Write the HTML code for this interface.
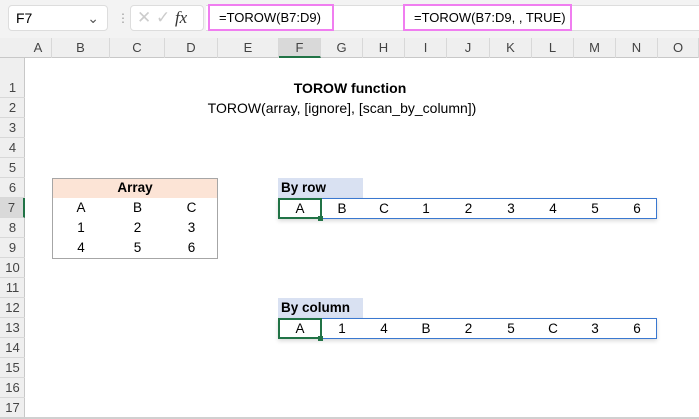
<!DOCTYPE html><html><head><style>
*{margin:0;padding:0;box-sizing:border-box}
body{width:699px;height:419px;overflow:hidden;background:#fff;font-family:"Liberation Sans",Arial,sans-serif;font-size:13.5px;color:#000;position:relative}
.a{position:absolute;white-space:nowrap}
.ch{position:absolute;top:38px;height:20px;line-height:20px;text-align:center;color:#444;border-right:1px solid #d8d8d8;font-size:13px}
.rh{position:absolute;left:0;width:25px;height:20px;line-height:20px;text-align:center;color:#444;border-bottom:1px solid #d8d8d8;font-size:13px}
.c{position:absolute;height:20px;line-height:20px;text-align:center;white-space:nowrap}
</style></head><body>
<div class="a" style="left:0;top:0;width:699px;height:38px;background:#f3f3f3"></div>
<div class="a" style="left:8px;top:5px;width:100px;height:26px;background:#fff;border:1px solid #ddd;border-radius:4px;line-height:24px;padding-left:7px;font-size:14px">F7<span style="position:absolute;right:8px;top:0;color:#555">&#8964;</span></div>
<div class="a" style="left:117px;top:10px;color:#999;line-height:16px;font-size:12px">&#8942;</div>
<div class="a" style="left:130px;top:5px;width:74px;height:26px;background:#fff;border:1px solid #ddd;border-radius:4px;color:#ccc;line-height:24px;padding-left:6px;font-size:17px">✕ ✓ <i style="color:#333;font-family:'Liberation Serif',serif">fx</i></div>
<div class="a" style="left:206px;top:5px;width:493px;height:26px;background:#fff;border-top:1px solid #ddd;border-bottom:1px solid #ddd"></div>
<div class="a" style="left:208px;top:4px;width:126px;height:27px;border:2px solid #f07ef0;line-height:23px;padding-left:9px;font-size:13px">=TOROW(B7:D9)</div>
<div class="a" style="left:403px;top:4px;width:169px;height:27px;border:2px solid #f07ef0;line-height:23px;padding-left:9px;font-size:13px">=TOROW(B7:D9, , TRUE)</div>
<div class="a" style="left:0;top:38px;width:699px;height:20px;background:#efefef;border-bottom:1px solid #c8c8c8"></div>
<div class="a" style="left:0;top:58px;width:25px;height:361px;background:#efefef;border-right:1px solid #c8c8c8"></div>
<div class="ch" style="left:25px;width:27px">A</div>
<div class="ch" style="left:52px;width:58px">B</div>
<div class="ch" style="left:110px;width:55px">C</div>
<div class="ch" style="left:165px;width:53px">D</div>
<div class="ch" style="left:218px;width:61px">E</div>
<div class="ch" style="left:279px;width:42px;background:#d9d9d9;border-bottom:2px solid #217346;height:20px">F</div>
<div class="ch" style="left:321px;width:42px">G</div>
<div class="ch" style="left:363px;width:42px">H</div>
<div class="ch" style="left:405px;width:42px">I</div>
<div class="ch" style="left:447px;width:43px">J</div>
<div class="ch" style="left:490px;width:42px">K</div>
<div class="ch" style="left:532px;width:42px">L</div>
<div class="ch" style="left:574px;width:42px">M</div>
<div class="ch" style="left:616px;width:42px">N</div>
<div class="ch" style="left:658px;width:41px">O</div>
<div class="rh" style="top:58px;height:40px;line-height:60px">1</div>
<div class="rh" style="top:98px">2</div><div class="rh" style="top:118px">3</div><div class="rh" style="top:138px">4</div><div class="rh" style="top:158px">5</div><div class="rh" style="top:178px">6</div>
<div class="rh" style="top:198px;background:#d9d9d9;border-right:2px solid #217346">7</div>
<div class="rh" style="top:218px">8</div><div class="rh" style="top:238px">9</div><div class="rh" style="top:258px">10</div><div class="rh" style="top:278px">11</div><div class="rh" style="top:298px">12</div><div class="rh" style="top:318px">13</div><div class="rh" style="top:338px">14</div><div class="rh" style="top:358px">15</div><div class="rh" style="top:378px">16</div><div class="rh" style="top:398px">17</div>
<div class="c" style="left:218px;width:264px;top:78px;font-weight:bold;font-size:14px">TOROW function</div>
<div class="c" style="left:142px;width:400px;top:98px;font-size:14px">TOROW(array, [ignore], [scan_by_column])</div>
<div class="a" style="left:52px;top:178px;width:166px;height:81px;border:1px solid #a6a6a6"></div>
<div class="a" style="left:53px;top:179px;width:164px;height:19px;background:#fce4d6"></div>
<div class="c" style="left:52px;width:166px;top:178px;font-weight:bold">Array</div>
<div class="c" style="left:52px;width:58px;top:198px">A</div><div class="c" style="left:110px;width:55px;top:198px">B</div><div class="c" style="left:165px;width:53px;top:198px">C</div>
<div class="c" style="left:52px;width:58px;top:218px">1</div><div class="c" style="left:110px;width:55px;top:218px">2</div><div class="c" style="left:165px;width:53px;top:218px">3</div>
<div class="c" style="left:52px;width:58px;top:238px">4</div><div class="c" style="left:110px;width:55px;top:238px">5</div><div class="c" style="left:165px;width:53px;top:238px">6</div>
<div class="a" style="left:278px;top:178px;width:85px;height:20px;background:#d9e1f2;font-weight:bold;line-height:20px;padding-left:3px">By row</div>
<div class="a" style="left:278px;top:298px;width:85px;height:20px;background:#d9e1f2;font-weight:bold;line-height:20px;padding-left:3px">By column</div>
<div class="a" style="left:278px;top:198px;width:379px;height:21px;border:1px solid #3a78d0;box-shadow:0 2px 4px rgba(0,0,0,.15)"></div>
<div class="a" style="left:278px;top:318px;width:379px;height:21px;border:1px solid #3a78d0;box-shadow:0 2px 4px rgba(0,0,0,.15)"></div>
<div class="a" style="left:278px;top:198px;width:44px;height:21px;border:2px solid #217346"></div>
<div class="a" style="left:318px;top:216px;width:5px;height:5px;background:#217346"></div>
<div class="a" style="left:278px;top:318px;width:44px;height:21px;border:2px solid #217346"></div>
<div class="a" style="left:318px;top:336px;width:5px;height:5px;background:#217346"></div>
<div class="c" style="left:279px;width:42px;top:199px">A</div><div class="c" style="left:321px;width:42px;top:199px">B</div><div class="c" style="left:363px;width:42px;top:199px">C</div><div class="c" style="left:405px;width:42px;top:199px">1</div><div class="c" style="left:447px;width:43px;top:199px">2</div><div class="c" style="left:490px;width:42px;top:199px">3</div><div class="c" style="left:532px;width:42px;top:199px">4</div><div class="c" style="left:574px;width:42px;top:199px">5</div><div class="c" style="left:616px;width:42px;top:199px">6</div>
<div class="c" style="left:279px;width:42px;top:319px">A</div><div class="c" style="left:321px;width:42px;top:319px">1</div><div class="c" style="left:363px;width:42px;top:319px">4</div><div class="c" style="left:405px;width:42px;top:319px">B</div><div class="c" style="left:447px;width:43px;top:319px">2</div><div class="c" style="left:490px;width:42px;top:319px">5</div><div class="c" style="left:532px;width:42px;top:319px">C</div><div class="c" style="left:574px;width:42px;top:319px">3</div><div class="c" style="left:616px;width:42px;top:319px">6</div>
<div class="a" style="left:0;top:417px;width:699px;height:2px;background:#d0d0d0"></div>
</body></html>
